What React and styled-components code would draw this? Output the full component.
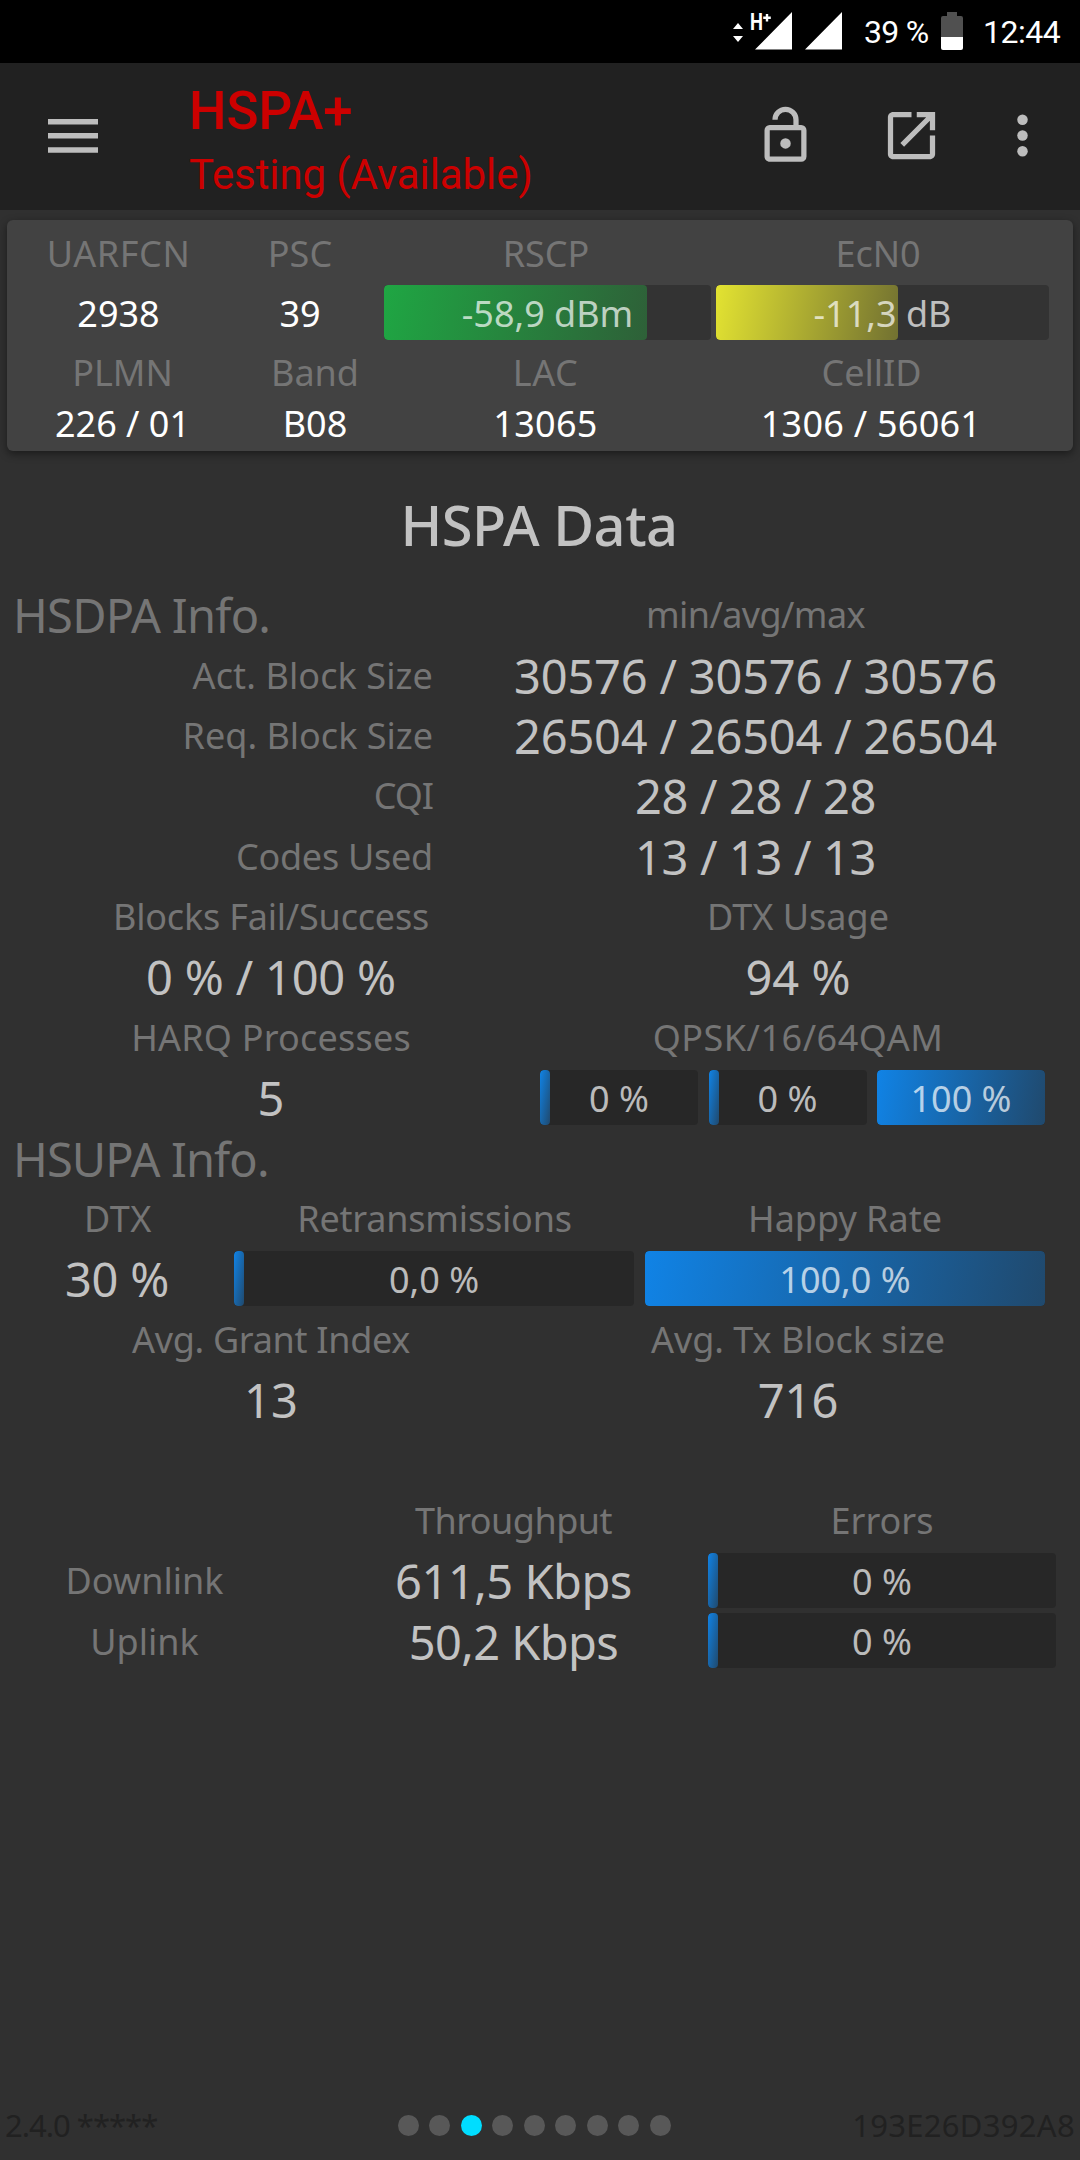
import styled, { createGlobalStyle } from "styled-components";

const GlobalStyle = createGlobalStyle`
	*, *::before, *::after {
		box-sizing: border-box;
	}

	body {
		margin: 0;
		background-color: #303030;
		font-family: "Noto Sans", "Open Sans", sans-serif;
	}
`;

const Screen = styled.div`
	width: 1080px;
	height: 2160px;
	display: flex;
	flex-direction: column;
	background-color: #303030;
	overflow: hidden;
`;

/* Status bar */

const StyledStatusBar = styled.div`
	height: 63px;
	display: flex;
	justify-content: flex-end;
	align-items: flex-start;
	padding-right: 20px;
	background-color: #000;
	color: #fff;
	font-family: Roboto, sans-serif;
	font-size: 32px;
	line-height: 65px;
	white-space: nowrap;
`;

const SignalIcons = styled.svg`
	width: 112px;
	height: 63px;
	margin-right: 22px;
`;

const BatteryPercent = styled.span`
	width: 65px;
	letter-spacing: -0.7px;
`;

const BatteryIcon = styled.svg`
	width: 22px;
	height: 63px;
	margin: 0 20px 0 12px;
`;

const Clock = styled.span`
	width: 77px;
	text-align: right;
	letter-spacing: -0.5px;
`;

/* Toolbar */

const StyledToolbar = styled.header`
	height: 147px;
	display: flex;
	align-items: flex-start;
	background-color: #212121;
	color: #bdbdbd;
`;

const MenuIcon = styled.svg`
	width: 50px;
	height: 34px;
	margin: 56px 91px 0 48px;
`;

const Titles = styled.div`
	flex-grow: 1;
	display: flex;
	flex-direction: column;
	color: #cc0000;
	font-family: Roboto, sans-serif;
	white-space: nowrap;
`;

const Title = styled.h1`
	margin: 17px 0 0;
	font-size: 53px;
	font-weight: 500;
	line-height: 62px;
	letter-spacing: -0.1px;
`;

const Subtitle = styled.span`
	font-size: 42px;
	line-height: 66px;
	letter-spacing: -0.1px;
`;

const Actions = styled.div`
	display: flex;
	padding: 41px 26px 0 0;
`;

const ActionIcon = styled.svg`
	width: 63px;
	height: 63px;
	margin-left: ${({ $gap }) => $gap}px;
	fill: currentColor;
`;

/* Shared text and bars */

const Label = styled.span`
	padding-top: 2px;
	color: #757575;
	font-size: 36px;
	line-height: 48px;
	letter-spacing: ${({ $spacing = 0 }) => $spacing}px;
	white-space: nowrap;
`;

const Value = styled.span`
	padding-top: 2px;
	color: #c2c2c2;
	font-size: 47px;
	line-height: 58px;
	letter-spacing: ${({ $spacing = 0 }) => $spacing}px;
	white-space: nowrap;
`;

const CellValue = styled(Label)`
	color: #fff;
`;

const tones = {
	green: "#1fa643, #2e6038",
	yellow: "#e3e331, #727131",
	blue: "#1083e6, #20496d",
};

const Track = styled.div`
	width: 100%;
	height: 55px;
	position: relative;
	border-radius: 4px;
	background-color: ${({ $raised }) => ($raised ? "#333333" : "#272727")};
	overflow: hidden;
`;

const Fill = styled.div`
	height: 100%;
	min-width: 10px;
	border-radius: 4px;
	background-image: linear-gradient(100deg, ${({ $tone }) => tones[$tone]});
`;

const BarText = styled.span`
	position: absolute;
	inset: 0;
	color: rgba(255, 255, 255, 0.7);
	font-size: 36px;
	line-height: 57px;
	text-align: center;
	white-space: nowrap;
`;

const Bar = ({ percent, text, tone = "blue", raised }) => (
	<Track $raised={raised}>
		<Fill
			$tone={tone}
			style={{ width: `${percent}%` }}
		/>
		<BarText>{text}</BarText>
	</Track>
);

/* Cell card */

const Card = styled.section`
	height: 231px;
	margin: 10px 7px 0;
	padding-top: 8px;
	border-radius: 6px;
	background-color: #424242;
	box-shadow: 0 3px 8px rgba(0, 0, 0, 0.45);
`;

const CardRow = styled.div`
	height: ${({ $height }) => $height}px;
	display: grid;
	grid-template-columns: ${({ $columns }) => $columns};
	align-items: center;
	justify-items: center;
`;

/* Data page */

const PageTitle = styled.h2`
	height: 60px;
	margin: 43px 2px 30px 0;
	color: #c2c2c2;
	font-size: 56px;
	font-weight: 500;
	line-height: 60px;
	letter-spacing: -0.5px;
	text-align: center;
`;

const Row = styled.div`
	height: 60.375px;
	display: grid;
	grid-template-columns: ${({ $columns }) => $columns};
	align-items: center;
	justify-items: center;
`;

const SectionTitle = styled.h3`
	justify-self: start;
	margin: 0;
	padding: 2px 0 0 13px;
	color: #757575;
	font-size: 47px;
	font-weight: 400;
	line-height: 58px;
	letter-spacing: ${({ $spacing = 0 }) => $spacing}px;
	white-space: nowrap;
`;

const EndLabel = styled(Label)`
	justify-self: end;
`;

const Modulations = styled.div`
	width: 505px;
	display: grid;
	grid-template-columns: 158px 158px 168px;
	column-gap: 10.5px;
	justify-self: start;
	margin-left: -2px;
`;

const STATS = "433px 645px";
const HALVES = "542px 512px";
const TOTALS = "289px 30px 389px 348px";

/* Footer */

const Footer = styled.footer`
	height: 70px;
	display: grid;
	grid-template-columns: 1fr auto 1fr;
	align-items: center;
	margin-top: auto;
	padding: 0 5px;
	color: #212121;
	font-size: 31px;
	line-height: 70px;
	white-space: nowrap;
`;

const Version = styled.span`
	letter-spacing: -1px;
`;

const Dots = styled.div`
	display: flex;
	gap: 10.5px;
	margin-right: 12px;
`;

const Dot = styled.span`
	width: 21px;
	height: 21px;
	border-radius: 50%;
	background-color: ${({ $active }) => ($active ? "#00ddff" : "#585858")};
`;

const DeviceId = styled.span`
	justify-self: end;
	letter-spacing: 0.3px;
`;

const blockStats = [
	{
		label: "Act. Block Size",
		value: "30576 / 30576 / 30576",
		labelSpacing: 0.1,
		valueSpacing: -0.2,
	},
	{
		label: "Req. Block Size",
		value: "26504 / 26504 / 26504",
		labelSpacing: 0,
		valueSpacing: -0.2,
	},
	{ label: "CQI", value: "28 / 28 / 28", labelSpacing: -1, valueSpacing: -0.35 },
	{
		label: "Codes Used",
		value: "13 / 13 / 13",
		labelSpacing: -0.25,
		valueSpacing: -0.35,
	},
];

const StatusBar = () => (
	<StyledStatusBar>
		<SignalIcons viewBox="730 0 112 63">
			<path
				fill="#fff"
				d="M738 23l5 6h-10zM733 36h10l-5 6zM792 12v37.500h-37zM842 12v37.500h-37z"
			/>
			<text
				x="750"
				y="30"
				fill="#fff"
				fontSize="24"
				fontWeight="700"
				textLength="13"
				lengthAdjust="spacingAndGlyphs"
			>
				H
			</text>
			<path
				fill="#fff"
				d="M765.800 14h2.400v2.500h2.600v2.400h-2.600v2.600h-2.400v-2.600h-2.600v-2.400h2.600z"
			/>
		</SignalIcons>
		<BatteryPercent>39 %</BatteryPercent>
		<BatteryIcon viewBox="0 0 22 63">
			<path
				fill="#505050"
				d="M6 12h10v4h4a2 2 0 0 1 2 2v19H0V18a2 2 0 0 1 2-2h4z"
			/>
			<path
				fill="#fff"
				d="M0 37h22v11a2 2 0 0 1-2 2H2a2 2 0 0 1-2-2z"
			/>
		</BatteryIcon>
		<Clock>12:44</Clock>
	</StyledStatusBar>
);

const Toolbar = () => (
	<StyledToolbar>
		<MenuIcon viewBox="0 0 50 34">
			<path
				fill="currentColor"
				d="M0 0h50v5.500H0zM0 14.100h50v5.500H0zM0 28.300h50v5.500H0z"
			/>
		</MenuIcon>
		<Titles>
			<Title>HSPA+</Title>
			<Subtitle>Testing (Available)</Subtitle>
		</Titles>
		<Actions>
			<ActionIcon
				$gap={0}
				viewBox="0 0 24 24"
			>
				<path d="M18 20V10H6v10h12m0-12a2 2 0 0 1 2 2v10a2 2 0 0 1-2 2H6c-1.110 0-2-.9-2-2V10a2 2 0 0 1 2-2h9V6a3 3 0 0 0-6 0H7a5 5 0 0 1 10 0v2h1m-6 9a2 2 0 1 1 0-4 2 2 0 0 1 0 4z" />
			</ActionIcon>
			<ActionIcon
				$gap={63}
				viewBox="0 0 24 24"
			>
				<path d="M19 19H5V5h7V3H5c-1.110 0-2 .9-2 2v14c0 1.100.890 2 2 2h14c1.100 0 2-.9 2-2v-7h-2v7zM14 3v2h3.590l-9.830 9.830 1.410 1.410L19 6.410V10h2V3h-7z" />
			</ActionIcon>
			<ActionIcon
				$gap={48}
				viewBox="0 0 24 24"
			>
				<circle cx="12" cy="6" r="2" />
				<circle cx="12" cy="12" r="2" />
				<circle cx="12" cy="18" r="2" />
			</ActionIcon>
		</Actions>
	</StyledToolbar>
);

const CellCard = () => (
	<Card>
		<CardRow
			$height={50}
			$columns="223px 140px 352px 312px"
		>
			<Label $spacing={0.6}>UARFCN</Label>
			<Label>PSC</Label>
			<Label>RSCP</Label>
			<Label>EcN0</Label>
		</CardRow>
		<CardRow
			$height={69}
			$columns="223px 140px 14px 327px 5px 333px"
		>
			<CellValue>2938</CellValue>
			<CellValue>39</CellValue>
			<span />
			<Bar
				percent={80.5}
				text="-58,9 dBm"
				tone="green"
				raised
			/>
			<span />
			<Bar
				percent={54.7}
				text="-11,3 dB"
				tone="yellow"
				raised
			/>
		</CardRow>
		<CardRow
			$height={50}
			$columns="231px 154px 307px 345px"
		>
			<Label>PLMN</Label>
			<Label>Band</Label>
			<Label $spacing={0.5}>LAC</Label>
			<Label>CellID</Label>
		</CardRow>
		<CardRow
			$height={52}
			$columns="231px 154px 307px 344px"
		>
			<CellValue>226 / 01</CellValue>
			<CellValue>B08</CellValue>
			<CellValue $spacing={0.3}>13065</CellValue>
			<CellValue $spacing={0.25}>1306 / 56061</CellValue>
		</CardRow>
	</Card>
);

const HsdpaInfo = () => (
	<>
		<Row $columns={STATS}>
			<SectionTitle $spacing={-0.75}>HSDPA Info.</SectionTitle>
			<Label $spacing={-0.6}>min/avg/max</Label>
		</Row>
		{blockStats.map(({ label, value, labelSpacing, valueSpacing }) => (
			<Row
				key={label}
				$columns={STATS}
			>
				<EndLabel $spacing={labelSpacing}>{label}</EndLabel>
				<Value $spacing={valueSpacing}>{value}</Value>
			</Row>
		))}
		<Row $columns={HALVES}>
			<Label $spacing={-0.2}>Blocks Fail/Success</Label>
			<Label>DTX Usage</Label>
		</Row>
		<Row $columns={HALVES}>
			<Value $spacing={-0.2}>0 % / 100 %</Value>
			<Value>94 %</Value>
		</Row>
		<Row $columns={HALVES}>
			<Label $spacing={0.2}>HARQ Processes</Label>
			<Label $spacing={0.5}>QPSK/16/64QAM</Label>
		</Row>
		<Row $columns={HALVES}>
			<Value>5</Value>
			<Modulations>
				<Bar percent={0} text="0 %" />
				<Bar percent={0} text="0 %" />
				<Bar percent={100} text="100 %" />
			</Modulations>
		</Row>
	</>
);

const HsupaInfo = () => (
	<>
		<Row $columns={STATS}>
			<SectionTitle $spacing={-0.9}>HSUPA Info.</SectionTitle>
		</Row>
		<Row $columns="236px 397px 424px">
			<Label $spacing={0.5}>DTX</Label>
			<Label $spacing={-0.2}>Retransmissions</Label>
			<Label>Happy Rate</Label>
		</Row>
		<Row $columns="234px 400px 11px 400px">
			<Value $spacing={-0.2}>30 %</Value>
			<Bar percent={0} text="0,0 %" />
			<span />
			<Bar percent={100} text="100,0 %" />
		</Row>
		<Row $columns={HALVES}>
			<Label $spacing={-0.3}>Avg. Grant Index</Label>
			<Label>Avg. Tx Block size</Label>
		</Row>
		<Row $columns={HALVES}>
			<Value>13</Value>
			<Value>716</Value>
		</Row>
	</>
);

const Totals = () => (
	<>
		<Row $columns={TOTALS} />
		<Row $columns={TOTALS}>
			<span />
			<span />
			<Label $spacing={-0.5}>Throughput</Label>
			<Label>Errors</Label>
		</Row>
		<Row $columns={TOTALS}>
			<Label>Downlink</Label>
			<span />
			<Value $spacing={-0.5}>611,5 Kbps</Value>
			<Bar percent={0} text="0 %" />
		</Row>
		<Row $columns={TOTALS}>
			<Label>Uplink</Label>
			<span />
			<Value $spacing={-0.6}>50,2 Kbps</Value>
			<Bar percent={0} text="0 %" />
		</Row>
	</>
);

const App = () => {
	const pages = Array.from({ length: 9 }, (_, index) => index);

	return (
		<>
			<GlobalStyle />
			<Screen>
				<StatusBar />
				<Toolbar />
				<CellCard />
				<PageTitle>HSPA Data</PageTitle>
				<HsdpaInfo />
				<HsupaInfo />
				<Totals />
				<Footer>
					<Version>2.4.0 *****</Version>
					<Dots>
						{pages.map((page) => (
							<Dot
								key={page}
								$active={page === 2}
							/>
						))}
					</Dots>
					<DeviceId>193E26D392A8</DeviceId>
				</Footer>
			</Screen>
		</>
	);
};

export default App;
